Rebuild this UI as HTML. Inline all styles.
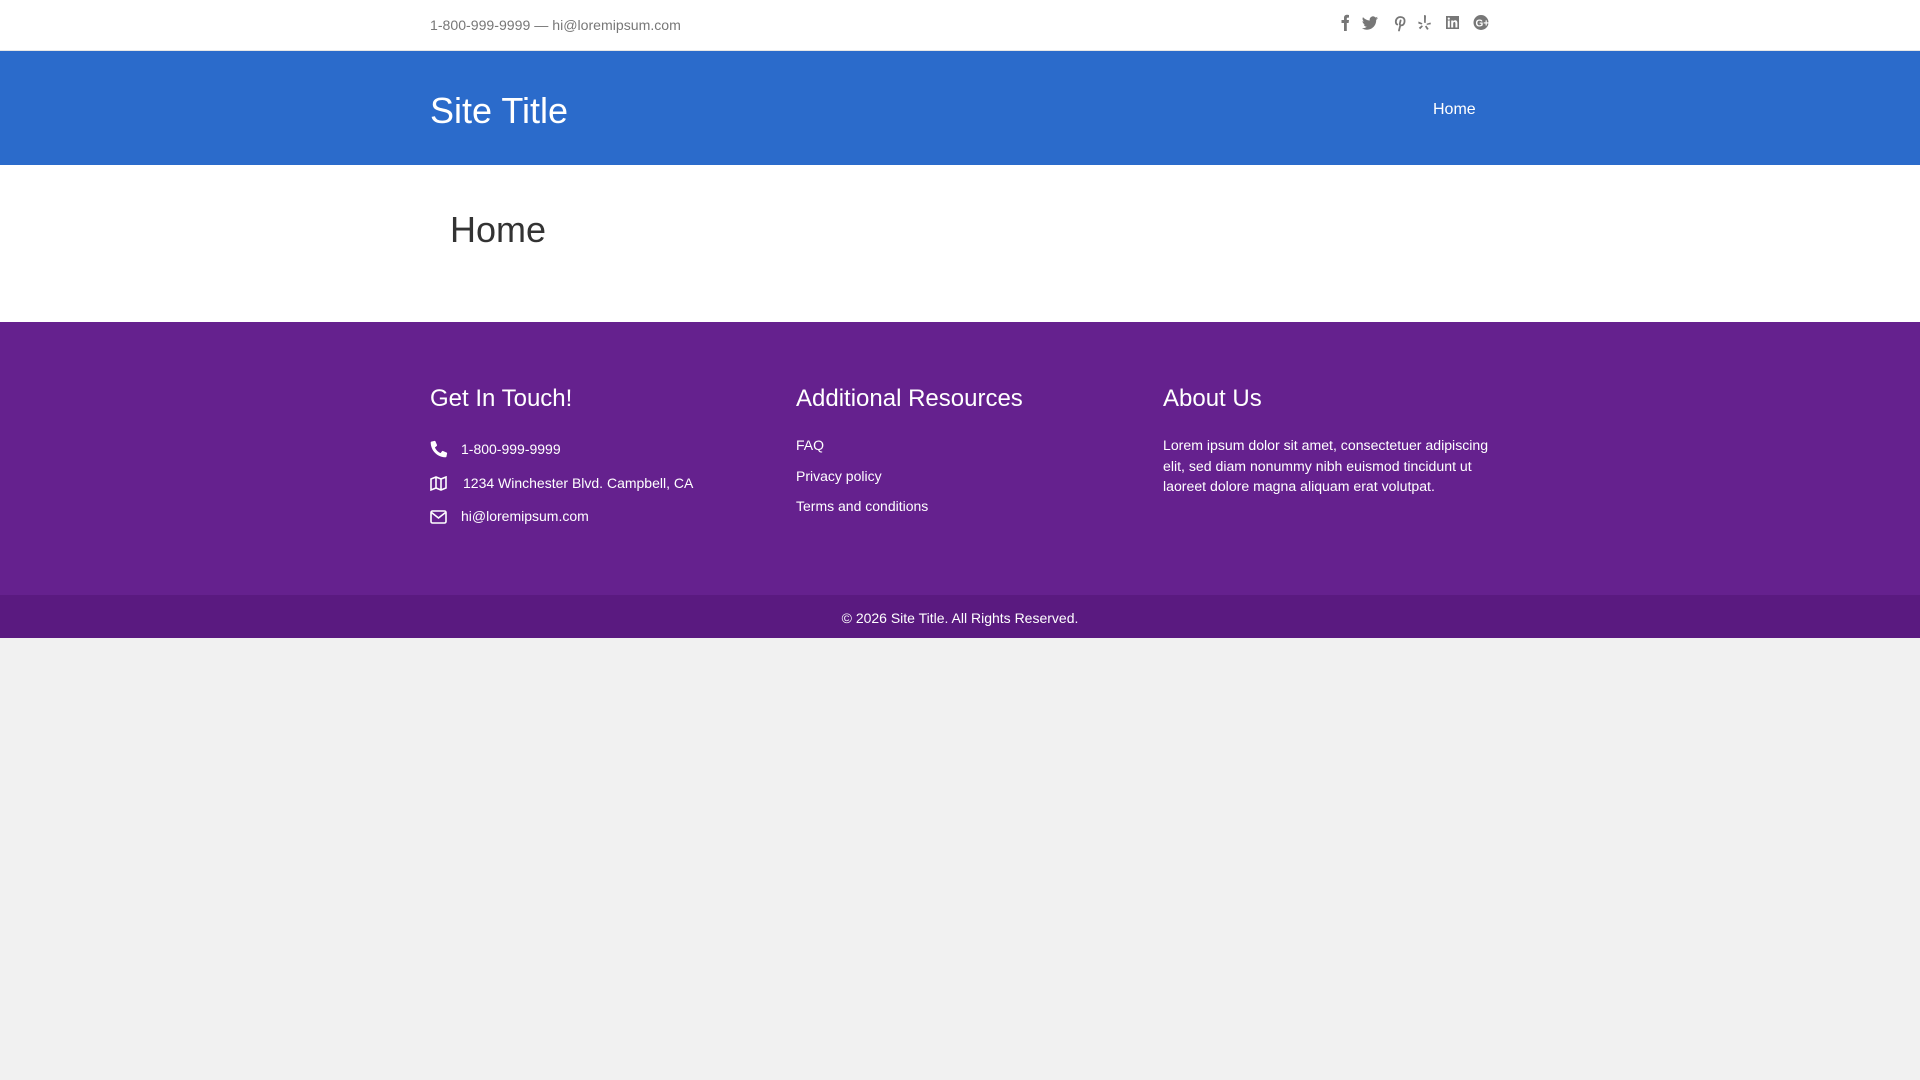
<!DOCTYPE html>
<html><head><style>
body{margin:0;width:1920px;height:1080px;background:#f1f1f1;font-family:"Liberation Sans",sans-serif;position:relative;overflow:hidden}
div,span{position:absolute}
.top{left:0;top:0;width:1920px;height:50px;background:#fff;border-bottom:1px solid #e6e6e6}
.hdr{left:0;top:51px;width:1920px;height:114px;background:#2b6bcb}
.main{left:0;top:165px;width:1920px;height:157px;background:#fff}
.foot{left:0;top:322px;width:1920px;height:273px;background:#65218e;color:#fff}
.bot{left:0;top:595px;width:1920px;height:43px;background:#5a1a80;color:#fff;font-size:14px;text-align:center;line-height:46px}
.h{font-size:24px;top:63px}
.t{font-size:14px;white-space:nowrap}
</style></head><body>
<div class="top">
<span style="left:430px;top:17px;font-size:14.1px;color:#777">1-800-999-9999 — hi@loremipsum.com</span>
<svg style="position:absolute;left:1336px;top:13px" width="160" height="20" fill="#777">
<path d="M8 18V10H5.5V7H8V5C8 2.8 9.2 1.8 11.3 1.8L13 2V4.6H11.8C10.9 4.6 10.8 5 10.8 5.7V7H13L12.6 10H10.8V18Z"/>
<path d="M42 5c-.6.3-1.2.4-1.9.5.7-.4 1.2-1 1.4-1.8-.6.4-1.3.6-2 .8a3.3 3.3 0 0 0-5.7 3c-2.7-.1-5.1-1.4-6.8-3.4-.9 1.5-.4 3.4 1 4.4-.5 0-1-.2-1.5-.4 0 1.6 1.1 3 2.7 3.3-.5.1-1 .2-1.5.1.4 1.3 1.7 2.3 3.1 2.3-1.4 1.1-3.2 1.6-4.9 1.4 6.5 4 14.5-.5 14.3-8.3.6-.5 1.2-1 1.7-1.6z"/>
<path d="M63 17.5l1.3-5.2M61.2 11.5C60.3 11 59.8 10 59.8 8.6c0-2.6 2-4.6 4.6-4.6 2.6 0 4.2 1.6 4.2 3.9 0 2.6-1.4 4.5-3.3 4.5-1 0-1.7-.8-1.5-1.7l.8-3.2" fill="none" stroke="#777" stroke-width="1.8" stroke-linecap="round"/>
<path d="M88 2l2 .5-.3 7.5-1.6-.2zM82.5 8.5l4 1.7-.9 1.3-3.3-1zM82.8 14.8l3.1-2.6 1 1.2-2.7 2.8zM89 13.5l1.3-1 2.4 3.4-1.6 1zM90.6 10.8l3.9-1.3.4 1.8-4.1.6z"/>
<path d="M110 3h13v13h-13zM111.8 7.5v7h2v-7zM112.8 4.5a1.1 1.1 0 1 0 0 2.2 1.1 1.1 0 0 0 0-2.2zM115.2 7.5v7h2v-4c0-1 .5-1.5 1.2-1.5s1 .5 1 1.5v4h2V10c0-2-1-2.7-2.3-2.7-1 0-1.6.5-1.9 1V7.5z" fill-rule="evenodd"/>
<circle cx="145" cy="9.5" r="7.5"/>
<text x="139.5" y="13.5" font-size="10" font-weight="bold" fill="#fff" font-family="Liberation Sans">G+</text>
</svg>
</div>
<div class="hdr">
<span style="left:430px;top:39px;font-size:36px;color:#fff">Site Title</span>
<span style="left:1433px;top:50px;font-size:16px;color:#fff">Home</span>
</div>
<div class="main"><span style="left:450px;top:44px;font-size:36px;color:#333">Home</span></div>
<div class="foot">
<span class="h" style="left:430px">Get In Touch!</span>
<span class="h" style="left:796px">Additional Resources</span>
<span class="h" style="left:1163px">About Us</span>
<svg style="position:absolute;left:430px;top:118px" width="18" height="18" fill="#fff"><path d="M16.5 12.5l-3.5-1.5c-.4-.2-.8 0-1 .3l-1.5 1.8C8 12 6 10 4.9 7.5l1.8-1.5c.3-.3.4-.7.3-1L5.5 1.5C5.3 1 4.9.8 4.5.9L1.3 1.6C1 1.7.7 2 .7 2.4.7 10.6 7.4 17.3 15.6 17.3c.4 0 .7-.3.8-.6l.7-3.2c.1-.4-.1-.8-.6-1z"/></svg>
<span class="t" style="left:461px;top:119px">1-800-999-9999</span>
<svg style="position:absolute;left:430px;top:154px" width="18" height="16" fill="none" stroke="#fff" stroke-width="1.6"><path d="M1 3l5-2 5 2 5-2v11l-5 2-5-2-5 2zM6 1v11M11 3v11"/></svg>
<span class="t" style="left:463px;top:153px">1234 Winchester Blvd. Campbell, CA</span>
<svg style="position:absolute;left:430px;top:188px" width="18" height="14" fill="none" stroke="#fff" stroke-width="1.6"><rect x="1" y="1" width="15" height="12" rx="1.5"/><path d="M1.5 2.5l7 5.5 7-5.5"/></svg>
<span class="t" style="left:461px;top:186px">hi@loremipsum.com</span>
<span class="t" style="left:796px;top:115px;font-size:14px">FAQ</span>
<span class="t" style="left:796px;top:146px;font-size:14px">Privacy policy</span>
<span class="t" style="left:796px;top:176px;font-size:14px">Terms and conditions</span>
<span style="left:1163px;top:113px;width:335px;font-size:14.1px;line-height:20.5px">Lorem ipsum dolor sit amet, consectetuer adipiscing elit, sed diam nonummy nibh euismod tincidunt ut laoreet dolore magna aliquam erat volutpat.</span>
</div>
<div class="bot">© 2026 Site Title. All Rights Reserved.</div>
</body></html>
